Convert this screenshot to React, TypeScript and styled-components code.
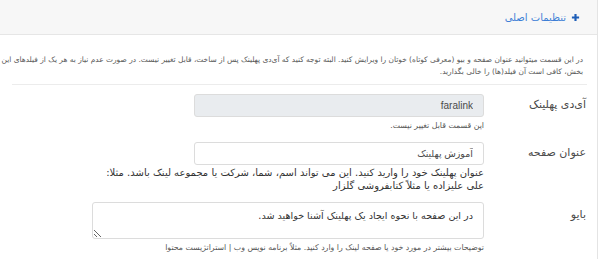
import React from 'react';
import styled, { createGlobalStyle } from 'styled-components';

const GlobalStyle = createGlobalStyle`
  html, body {
    margin: 0;
    padding: 0;
    background: #ffffff;
    direction: rtl;
    overflow: hidden;
  }
  body {
    font-family: "DejaVu Sans", Tahoma, sans-serif;
  }
`;

const Card = styled.div`
  margin-right: 2px;
  border-right: 1px solid #e4e4e4;
  height: 259px;
  overflow: hidden;
  background: #ffffff;
`;

const Header = styled.div`
  height: 34px;
  border-bottom: 1px solid #e6e6e6;
  background: #f7f7f7;
  display: flex;
  align-items: center;
  gap: 5px;
  padding-right: 17px;
`;

const PlusIcon = styled.svg`
  width: 9px;
  height: 9px;
  flex: none;
`;

const Title = styled.span`
  font-size: 10px;
  color: #3d7fd6;
`;

const Description = styled.p`
  margin: 0 10px 0 12px;
  padding: 19px 4px 6px 0;
  border-bottom: 1px solid #ececec;
  font-size: 7.45px;
  line-height: 12px;
  color: #5a5a5a;
  white-space: nowrap;
`;

const Form = styled.div`
  padding: 9px 11px 0 0;
  display: flex;
  flex-direction: column;
  gap: 10px;
`;

const Row = styled.div`
  display: flex;
  align-items: flex-start;
`;

const Label = styled.label<{ $top?: number }>`
  width: 100px;
  margin-left: 2px;
  flex: none;
  font-size: 11px;
  line-height: 18px;
  color: #4a4a4a;
  padding-top: ${(p) => p.$top ?? 0}px;
`;

const Field = styled.div`
  display: flex;
  flex-direction: column;
  align-items: flex-start;
`;

const Input = styled.input<{ $locked?: boolean }>`
  box-sizing: border-box;
  width: 290px;
  height: 23px;
  padding: 0 10px;
  border: 1px solid #dcdcdc;
  border-radius: 3px;
  background: ${(p) => (p.$locked ? '#e9ecef' : '#ffffff')};
  font-family: "Liberation Sans", "DejaVu Sans", sans-serif;
  font-size: ${(p) => (p.$locked ? '10px' : '9.5px')};
  color: #4a4a4a;
  direction: rtl;
  text-align: right;
  outline: none;
`;

const TextArea = styled.textarea`
  box-sizing: border-box;
  width: 392px;
  height: 37px;
  padding: 5px 10px;
  border: 1px solid #dcdcdc;
  border-radius: 3px;
  font-family: inherit;
  font-size: 9.6px;
  line-height: 16px;
  color: #333;
  direction: rtl;
  outline: none;
`;

const Help = styled.div<{ $large?: boolean }>`
  margin-top: ${(p) => (p.$large ? '1px' : '2px')};
  font-size: ${(p) => (p.$large ? '10px' : '7.8px')};
  line-height: 13px;
  color: ${(p) => (p.$large ? '#333' : '#555')};
  white-space: nowrap;
`;

export default function App() {
  return (
    <>
      <GlobalStyle />
      <Card>
        <Header>
          <PlusIcon viewBox="0 0 10 10">
            <path d="M5 1v8M1 5h8" stroke="#1f5fb8" strokeWidth="2.4" />
          </PlusIcon>
          <Title>تنظیمات اصلی</Title>
        </Header>
        <Description>
          در این قسمت میتوانید عنوان صفحه و بیو (معرفی کوتاه) خوتان را ویرایش کنید. البته توجه کنید که آی‌دی پهلینک پس از ساخت، قابل تغییر نیست. در صورت عدم نیاز به هر یک از فیلدهای این
          <br />
          بخش، کافی است آن فیلد(ها) را خالی بگذارید.
        </Description>
        <Form>
          <Row>
            <Label $top={2}>آی‌دی پهلینک</Label>
            <Field>
              <Input $locked disabled value="faralink" readOnly />
              <Help>این قسمت قابل تغییر نیست.</Help>
            </Field>
          </Row>
          <Row>
            <Label $top={2}>عنوان صفحه</Label>
            <Field>
              <Input defaultValue="آموزش پهلینک" />
              <Help $large>
                عنوان پهلینک خود را وارید کنید. این می تواند اسم، شما، شرکت یا مجموعه لینک باشد. مثلا:
                <br />
                علی علیزاده یا مثلاً کتابفروشی گلزار
              </Help>
            </Field>
          </Row>
          <Row>
            <Label $top={4}>بایو</Label>
            <Field>
              <TextArea defaultValue="در این صفحه با نحوه ایجاد یک پهلینک آشنا خواهید شد." />
              <Help>توضیحات بیشتر در مورد خود یا صفحه لینک را وارد کنید. مثلاً برنامه نویس وب | استراتژیست محتوا</Help>
            </Field>
          </Row>
        </Form>
      </Card>
    </>
  );
}
